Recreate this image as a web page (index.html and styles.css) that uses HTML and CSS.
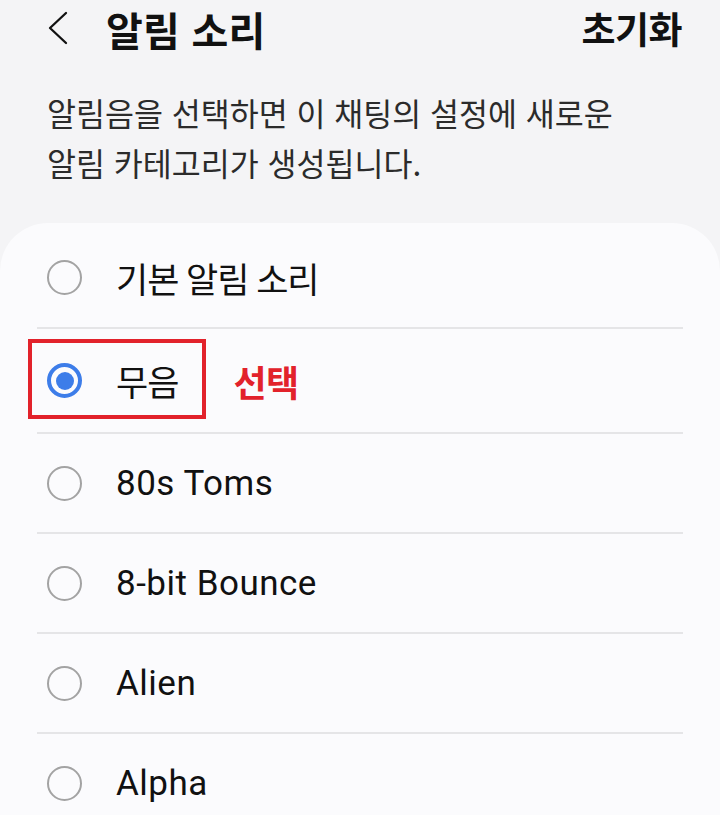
FILE: index.html
```html
<!DOCTYPE html>
<html lang="ko">
<head>
<meta charset="utf-8">
<title>알림 소리</title>
<link rel="stylesheet" href="styles.css">
</head>
<body>
<header class="header">
  <svg class="back" width="24" height="34" viewBox="0 0 24 34"><path d="M20 2 L4 17 L20 32" fill="none" stroke="#111" stroke-width="2.3" stroke-linecap="round" stroke-linejoin="round"/></svg>
  <h1 class="title">알림 소리</h1>
  <span class="reset">초기화</span>
</header>
<p class="desc">알림음을 선택하면 이 채팅의 설정에 새로운<br>알림 카테고리가 생성됩니다.</p>
<section class="card">
  <div class="row row-first"><span class="radio"></span><span class="label ko">기본 알림 소리</span></div>
  <div class="row row-selected"><span class="highlight"></span><span class="radio radio-on"></span><span class="label ko">무음</span><span class="note">선택</span></div>
  <div class="row"><span class="radio"></span><span class="label">80s Toms</span></div>
  <div class="row"><span class="radio"></span><span class="label">8-bit Bounce</span></div>
  <div class="row"><span class="radio"></span><span class="label">Alien</span></div>
  <div class="row"><span class="radio"></span><span class="label">Alpha</span></div>
</section>
</body>
</html>
```
FILE: styles.css
```css
html, body {
  margin: 0;
  padding: 0;
  background: #f4f4f6;
  font-family: "Roboto", "Noto Sans CJK KR", sans-serif;
  color: #111;
  overflow: hidden;
}
.header {
  display: flex;
  align-items: center;
  height: 58px;
  padding: 0 38px 0 46px;
}
.back {
  flex: none;
  display: block;
  margin-bottom: 2px;
}
.title {
  margin: 0 0 0 36px;
  font-family: "Noto Sans CJK KR", sans-serif;
  font-size: 40px;
  font-weight: 700;
  letter-spacing: 0.2px;
  flex: 1;
  line-height: normal;
}
.reset {
  font-family: "Noto Sans CJK KR", sans-serif;
  font-size: 37px;
  font-weight: 700;
  letter-spacing: -0.5px;
  line-height: normal;
  margin-bottom: 2px;
}
.desc {
  margin: 0;
  padding: 29px 30px 0 47px;
  font-family: "Noto Sans CJK KR", sans-serif;
  font-size: 31.5px;
  line-height: 50px;
  letter-spacing: 0;
  color: #2b2b2b;
  white-space: nowrap;
}
.card {
  margin-top: 36px;
  background: #fbfbfd;
  border-radius: 48px 48px 0 0;
  padding-top: 4px;
  min-height: 600px;
}
.row {
  position: relative;
  display: flex;
  align-items: center;
  height: 98px;
  margin: 0 37px;
  padding-left: 10px;
  border-bottom: 2px solid #e5e5e7;
}
.row-first {
  height: 100px;
}
.row-selected {
  height: 103px;
}
.radio {
  flex: none;
  box-sizing: border-box;
  width: 35px;
  height: 35px;
  border: 2.5px solid #a3a3a3;
  border-radius: 50%;
  display: flex;
  align-items: center;
  justify-content: center;
}
.radio-on {
  border: 4px solid #3d7de9;
}
.radio-on::after {
  content: "";
  width: 18px;
  height: 18px;
  border-radius: 50%;
  background: #3d7de9;
}
.label {
  margin-left: 34px;
  font-size: 35px;
  letter-spacing: 0.5px;
  color: #111;
}
.label.ko {
  letter-spacing: -1px;
}
.note {
  margin-left: 55px;
  font-family: "Noto Sans CJK KR", sans-serif;
  font-weight: 700;
  font-size: 36px;
  color: #e2222b;
  letter-spacing: -0.5px;
}
.highlight {
  position: absolute;
  left: -9px;
  top: 10px;
  width: 178px;
  height: 80px;
  box-sizing: border-box;
  border: 4px solid #e2222b;
}
```
